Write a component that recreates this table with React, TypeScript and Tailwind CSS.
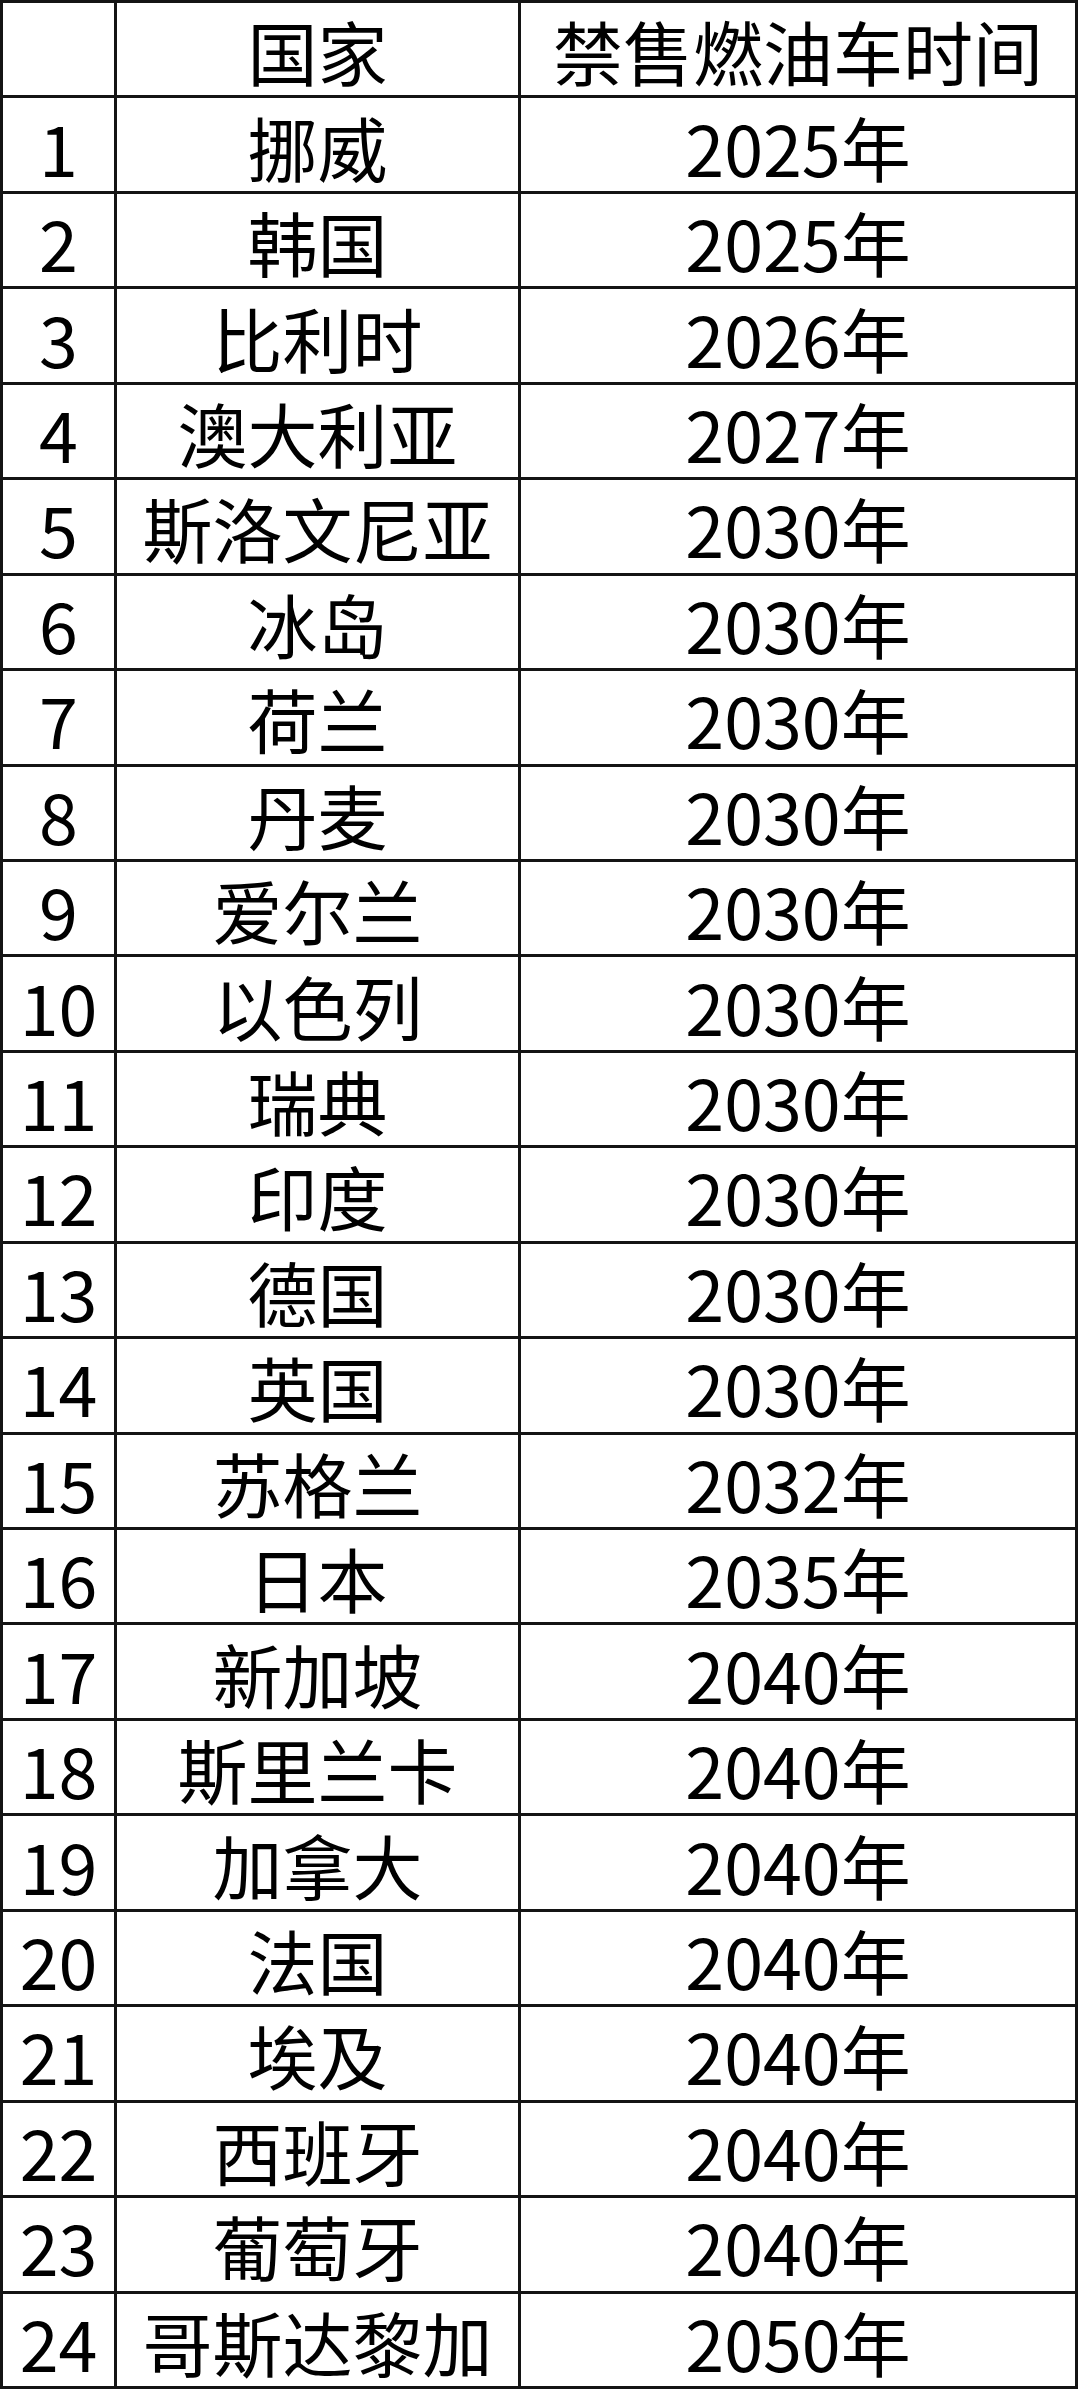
const rows: [string, string][] = [
  ["挪威", "2025年"],
  ["韩国", "2025年"],
  ["比利时", "2026年"],
  ["澳大利亚", "2027年"],
  ["斯洛文尼亚", "2030年"],
  ["冰岛", "2030年"],
  ["荷兰", "2030年"],
  ["丹麦", "2030年"],
  ["爱尔兰", "2030年"],
  ["以色列", "2030年"],
  ["瑞典", "2030年"],
  ["印度", "2030年"],
  ["德国", "2030年"],
  ["英国", "2030年"],
  ["苏格兰", "2032年"],
  ["日本", "2035年"],
  ["新加坡", "2040年"],
  ["斯里兰卡", "2040年"],
  ["加拿大", "2040年"],
  ["法国", "2040年"],
  ["埃及", "2040年"],
  ["西班牙", "2040年"],
  ["葡萄牙", "2040年"],
  ["哥斯达黎加", "2050年"],
];

function Cell({ children }: { children?: React.ReactNode }) {
  return (
    <div className="flex items-center justify-center whitespace-nowrap border-r-[3px] border-b-[3px] border-[#141414] pt-[4px] leading-[1.2]">
      {children}
    </div>
  );
}

export default function App() {
  return (
    <div className="h-[2389px] w-[1080px] bg-white">
      <div
        className="grid h-[2389px] w-[1078px] grid-cols-[114px_404px_557px] grid-rows-[repeat(25,1fr)] border-t-[3px] border-l-[3px] border-[#141414] text-[70px] text-black"
        style={{ fontFamily: '"Noto Sans CJK SC", "Noto Sans", sans-serif' }}
      >
        <Cell />
        <Cell>国家</Cell>
        <Cell>禁售燃油车时间</Cell>
        {rows.map(([country, year], i) => (
          <div key={i} className="contents">
            <Cell>{i + 1}</Cell>
            <Cell>{country}</Cell>
            <Cell>{year}</Cell>
          </div>
        ))}
      </div>
    </div>
  );
}
